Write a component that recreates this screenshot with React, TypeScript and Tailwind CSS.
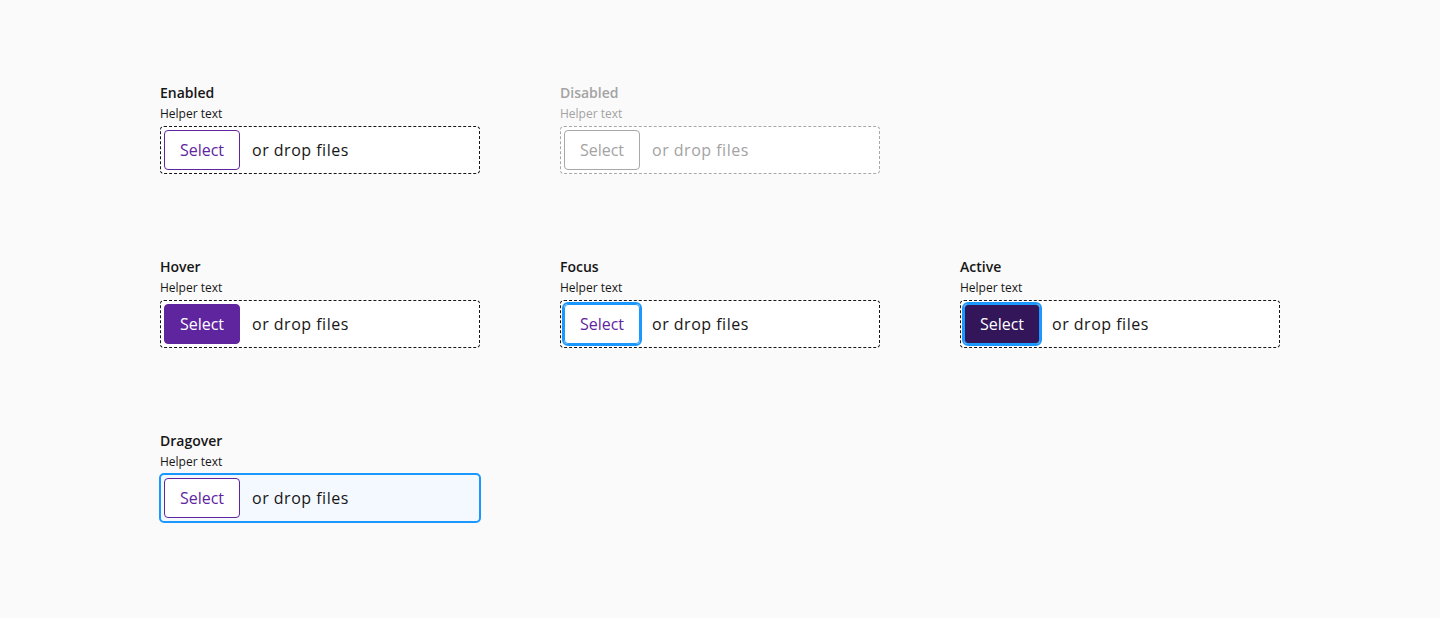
import React from "react";

type State = "enabled" | "disabled" | "hover" | "focus" | "active" | "dragover";

function Uploader({ label, state }: { label: string; state: State }) {
  const disabled = state === "disabled";
  const labelCls = disabled ? "text-[#a3a3a3]" : "text-[#161616]";
  const helperCls = disabled ? "text-[#a3a3a3]" : "text-[#161616]";

  let box =
    "flex items-center gap-3 h-[48px] w-[320px] rounded-[4px] border border-dashed bg-white p-[3px]";
  if (disabled) box += " border-[#a8a8a8]";
  else if (state === "dragover")
    box =
      "flex items-center gap-3 h-[50px] w-[322px] -mx-[1px] -my-[1px] rounded-[5px] border-2 border-solid border-[#1a98ff] bg-[#f4f9ff] p-[3px]";
  else box += " border-[#161616]";

  let btn =
    "flex h-[40px] w-[76px] items-center justify-center rounded-[4px] border text-[16px] leading-6";
  if (state === "enabled" || state === "dragover")
    btn += " border-[#5f259f] bg-white text-[#5f259f]";
  else if (state === "disabled") btn += " border-[#a8a8a8] bg-white text-[#a3a3a3]";
  else if (state === "hover") btn += " border-[#5f259f] bg-[#5f259f] text-white";
  else if (state === "focus")
    btn += " border-[#1a98ff] bg-white text-[#5f259f] outline-2 outline-solid outline-[#1a98ff]";
  else if (state === "active")
    btn += " border-[#1a98ff] bg-[#321659] text-white outline-2 outline-solid outline-[#1a98ff]";

  return (
    <div className="w-[320px]">
      <div className={`text-[14px] leading-5 font-semibold ${labelCls}`}>{label}</div>
      <div className={`mt-[3px] text-[12px] leading-4 ${helperCls}`}>Helper text</div>
      <div className="mt-[4px]">
        <div className={box}>
          <div className={btn}>Select</div>
          <span
            className={`text-[16px] leading-6 tracking-[0.5px] ${disabled ? "text-[#a3a3a3]" : "text-[#161616]"}`}
          >
            or drop files
          </span>
        </div>
      </div>
    </div>
  );
}

export default function App() {
  return (
    <div
      className="min-h-[618px] w-full bg-[#fafafa] pl-[160px] pt-[83px]"
      style={{ fontFamily: '"Open Sans", "Noto Sans", sans-serif' }}
    >
      <div className="grid grid-cols-[320px_320px_320px] gap-x-[80px] gap-y-[83px]">
        <Uploader label="Enabled" state="enabled" />
        <Uploader label="Disabled" state="disabled" />
        <div />
        <Uploader label="Hover" state="hover" />
        <Uploader label="Focus" state="focus" />
        <Uploader label="Active" state="active" />
        <Uploader label="Dragover" state="dragover" />
      </div>
    </div>
  );
}
